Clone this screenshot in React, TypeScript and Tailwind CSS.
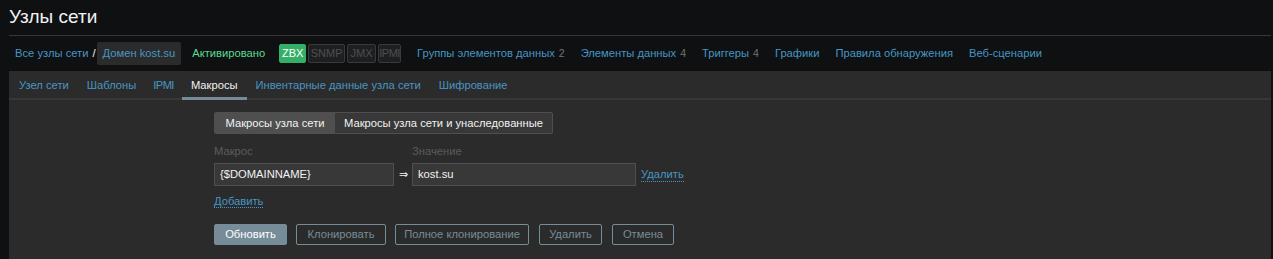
import React from "react";

const tabs = [
  "Узел сети",
  "Шаблоны",
  "IPMI",
  "Макросы",
  "Инвентарные данные узла сети",
  "Шифрование",
];

const links: { label: string; count?: number }[] = [
  { label: "Группы элементов данных", count: 2 },
  { label: "Элементы данных", count: 4 },
  { label: "Триггеры", count: 4 },
  { label: "Графики" },
  { label: "Правила обнаружения" },
  { label: "Веб-сценарии" },
];

export default function App() {
  return (
    <div
      className="min-h-[259px] bg-[#0e1012] pl-[9px] pr-[2px] text-[11.2px] text-[#f2f2f2]"
      style={{ fontFamily: '"Liberation Sans", Arial, sans-serif' }}
    >
      {/* Header */}
      <div className="flex h-[36px] items-center border-b border-[#383838] pb-[2px]">
        <h1 className="text-[19px] leading-none text-[#f2f2f2]">Узлы сети</h1>
      </div>

      {/* Breadcrumbs */}
      <div className="flex h-[35px] items-center pl-[6px]">
        <a className="text-[#4796c4]">Все узлы сети</a>
        <span className="ml-[4px] text-[#f2f2f2]">/</span>
        <span className="ml-[1px] rounded-[2px] bg-[#2b2b2b] px-[6px] py-[3px] text-[#4796c4]">
          Домен kost.su
        </span>
        <span className="ml-[11px] text-[#59db8f]">Активировано</span>
        <div className="ml-[14px] flex h-[19px] text-[11px] leading-[17px]">
          <span className="w-[27px] rounded-[2px] border border-[#34af67] bg-[#34af67] text-center text-white">
            ZBX
          </span>
          <span className="ml-[2px] w-[37px] rounded-[2px] border border-[#3a3a3a] bg-[#1e1f21] text-center text-[#4f4f4f]">
            SNMP
          </span>
          <span className="ml-[2px] w-[29px] rounded-[2px] border border-[#3a3a3a] bg-[#1e1f21] text-center text-[#4f4f4f]">
            JMX
          </span>
          <span className="ml-[2px] w-[23px] rounded-[2px] border border-[#3a3a3a] bg-[#1e1f21] text-center tracking-[-0.5px] text-[#4f4f4f]">
            IPMI
          </span>
        </div>
        <div className="ml-[16px] flex gap-[16px]">
          {links.map((l) => (
            <span key={l.label} className="text-[#4796c4]">
              {l.label}
              {l.count !== undefined && (
                <span className="ml-[4px] text-[10.5px] text-[#737373]">{l.count}</span>
              )}
            </span>
          ))}
        </div>
      </div>

      {/* Panel */}
      <div className="bg-[#2b2b2b] min-h-[190px]">
        <div className="flex h-[29px] border-b-2 border-[#383838]">
          {tabs.map((t) => {
            const active = t === "Макросы";
            return (
              <div
                key={t}
                className={`-mb-[2px] flex items-center ${
                  active
                    ? "border-b-[3px] border-[#768d99] px-[9px] pt-[2px] text-[#f2f2f2]"
                    : "text-[#4796c4]"
                } ${t === "Узел сети" ? "ml-[1px] px-[9px]" : ""} ${
                  t === "IPMI" ? "px-[8px] tracking-[-0.6px]" : ""
                } ${!active && t !== "Узел сети" && t !== "IPMI" ? "px-[9px]" : ""}`}
              >
                {t}
              </div>
            );
          })}
        </div>

        <div className="pl-[205px] pt-[12px]">
          {/* Sub tabs */}
          <div className="flex h-[22px] w-fit rounded-[2px] border border-[#4f4f4f]">
            <div className="flex w-[120px] items-center justify-center bg-[#4f4f4f] text-[#f2f2f2]">
              Макросы узла сети
            </div>
            <div className="flex w-[217px] items-center justify-center bg-[#383838] text-[#f2f2f2]">
              Макросы узла сети и унаследованные
            </div>
          </div>

          {/* Macro table */}
          <div className="mt-[9px] flex text-[#5c5c5c]">
            <span className="w-[198px]">Макрос</span>
            <span>Значение</span>
          </div>
          <div className="mt-[3px] flex items-center">
            <div className="flex h-[23px] w-[180px] items-center border border-[#4f4f4f] bg-[#383838] px-[5px] text-[#f2f2f2]">
              {"{$DOMAINNAME}"}
            </div>
            <span className="w-[18px] text-center text-[#f2f2f2]">⇒</span>
            <div className="flex h-[23px] w-[224px] items-center border border-[#4f4f4f] bg-[#383838] px-[5px] text-[#f2f2f2]">
              kost.su
            </div>
            <span className="ml-[5px] border-b border-dotted border-[#4796c4] text-[#4796c4] leading-[14px]">
              Удалить
            </span>
          </div>

          <div className="mt-[7px]">
            <span className="border-b border-dotted border-[#4796c4] text-[#4796c4] leading-[14px]">
              Добавить
            </span>
          </div>

          {/* Buttons */}
          <div className="mt-[14px] flex gap-[9px] pb-[13px]">
            <button className="h-[21px] w-[73px] rounded-[2px] border border-[#768d99] bg-[#768d99] text-[#ffffff]">
              Обновить
            </button>
            <button className="h-[21px] w-[90px] rounded-[2px] border border-[#768d99] text-[#768d99]">
              Клонировать
            </button>
            <button className="h-[21px] w-[134px] rounded-[2px] border border-[#768d99] text-[#768d99]">
              Полное клонирование
            </button>
            <button className="ml-[1px] h-[21px] w-[63px] rounded-[2px] border border-[#768d99] text-[#768d99]">
              Удалить
            </button>
            <button className="ml-[1px] h-[21px] w-[62px] rounded-[2px] border border-[#768d99] text-[#768d99]">
              Отмена
            </button>
          </div>
        </div>
      </div>
    </div>
  );
}
